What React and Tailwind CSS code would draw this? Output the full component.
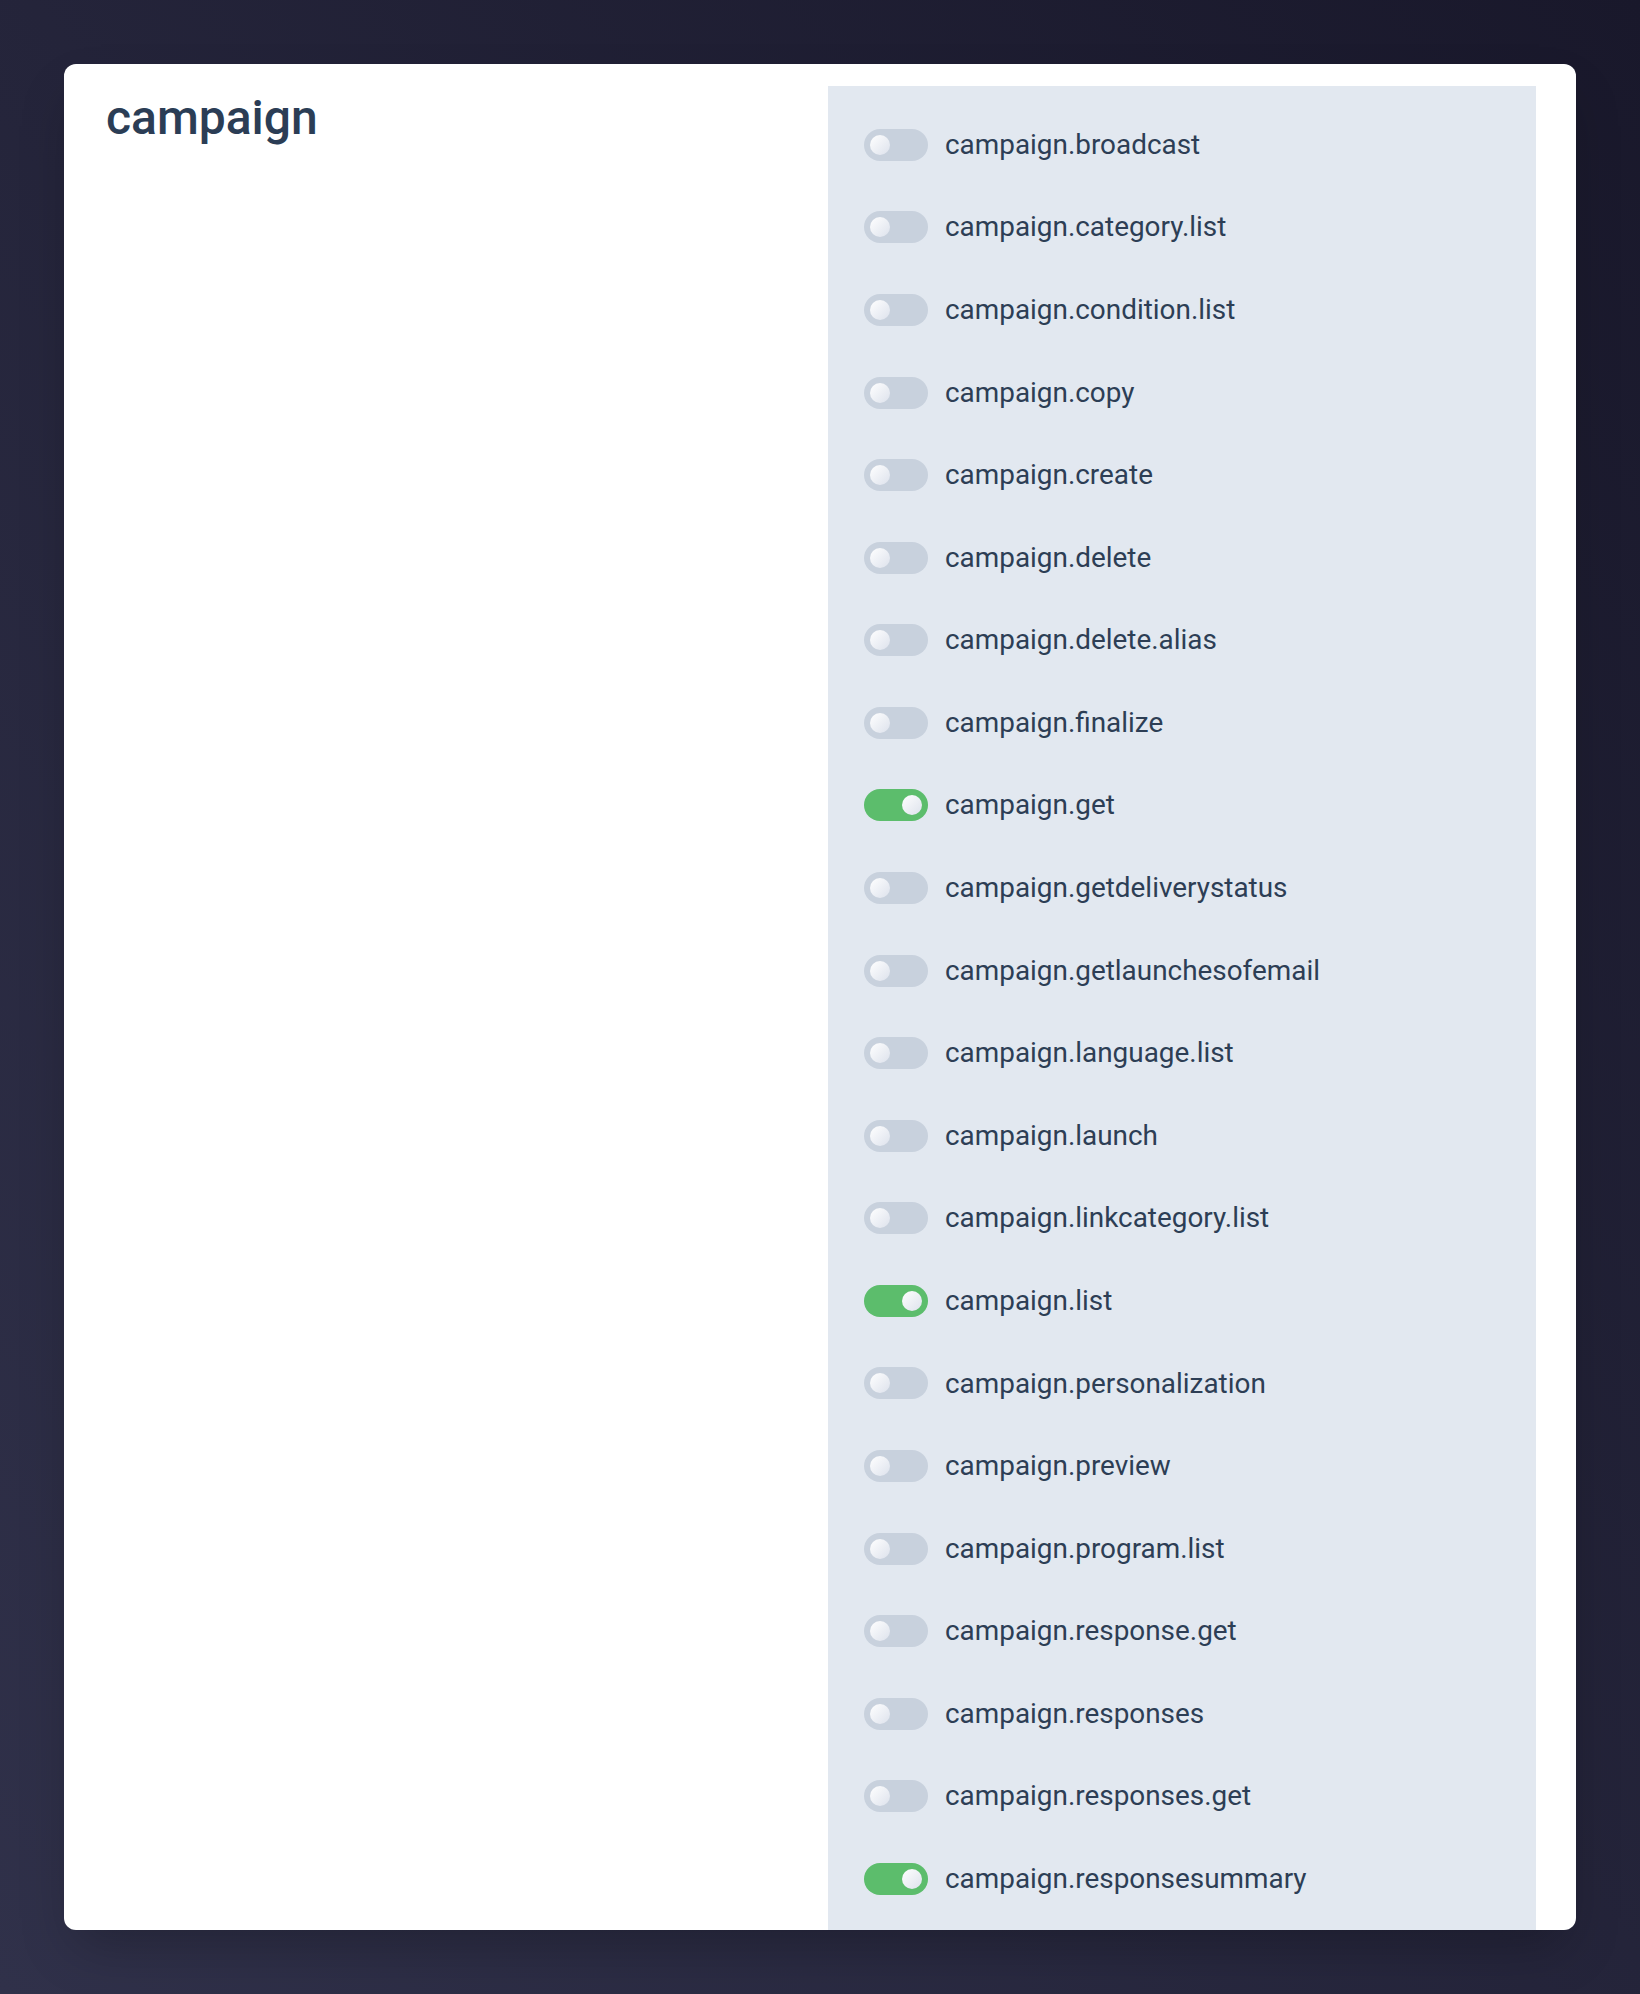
import React from "react";

const items = [
  ["campaign.broadcast", false],
  ["campaign.category.list", false],
  ["campaign.condition.list", false],
  ["campaign.copy", false],
  ["campaign.create", false],
  ["campaign.delete", false],
  ["campaign.delete.alias", false],
  ["campaign.finalize", false],
  ["campaign.get", true],
  ["campaign.getdeliverystatus", false],
  ["campaign.getlaunchesofemail", false],
  ["campaign.language.list", false],
  ["campaign.launch", false],
  ["campaign.linkcategory.list", false],
  ["campaign.list", true],
  ["campaign.personalization", false],
  ["campaign.preview", false],
  ["campaign.program.list", false],
  ["campaign.response.get", false],
  ["campaign.responses", false],
  ["campaign.responses.get", false],
  ["campaign.responsesummary", true],
];

function Toggle({ on }) {
  return (
    <div
      className={
        "flex h-[32px] w-[64px] shrink-0 items-center rounded-full px-[6px] " +
        (on ? "justify-end bg-[#5cbd6c]" : "justify-start bg-[#c8d1dd]")
      }
    >
      <div className="h-[20px] w-[20px] rounded-full bg-linear-to-br from-white to-[#dde2ec]" />
    </div>
  );
}

export default function App() {
  return (
    <div
      className="h-screen bg-linear-to-bl from-[#19182b] to-[#30314a] p-16"
      style={{ fontFamily: "Roboto, 'Noto Sans', sans-serif" }}
    >
      <div className="flex h-full overflow-hidden rounded-xl bg-white pl-[42px] pr-[40px] pt-[22px] shadow-2xl">
        <div className="flex-1">
          <h1 className="pt-[1px] text-[48px] font-medium leading-[62px] text-[#2b3d55]">campaign</h1>
        </div>
        <div className="w-[708px] shrink-0 self-start bg-[#e2e8f0] pl-[36px] pt-[17.5px] pb-[16px]">
          {items.map(([name, on]) => (
            <div key={name} className="flex h-[82.58px] items-center gap-[17px]">
              <Toggle on={on} />
              <span className="text-[27.9px] text-[#2d3e55]">{name}</span>
            </div>
          ))}
        </div>
      </div>
    </div>
  );
}
